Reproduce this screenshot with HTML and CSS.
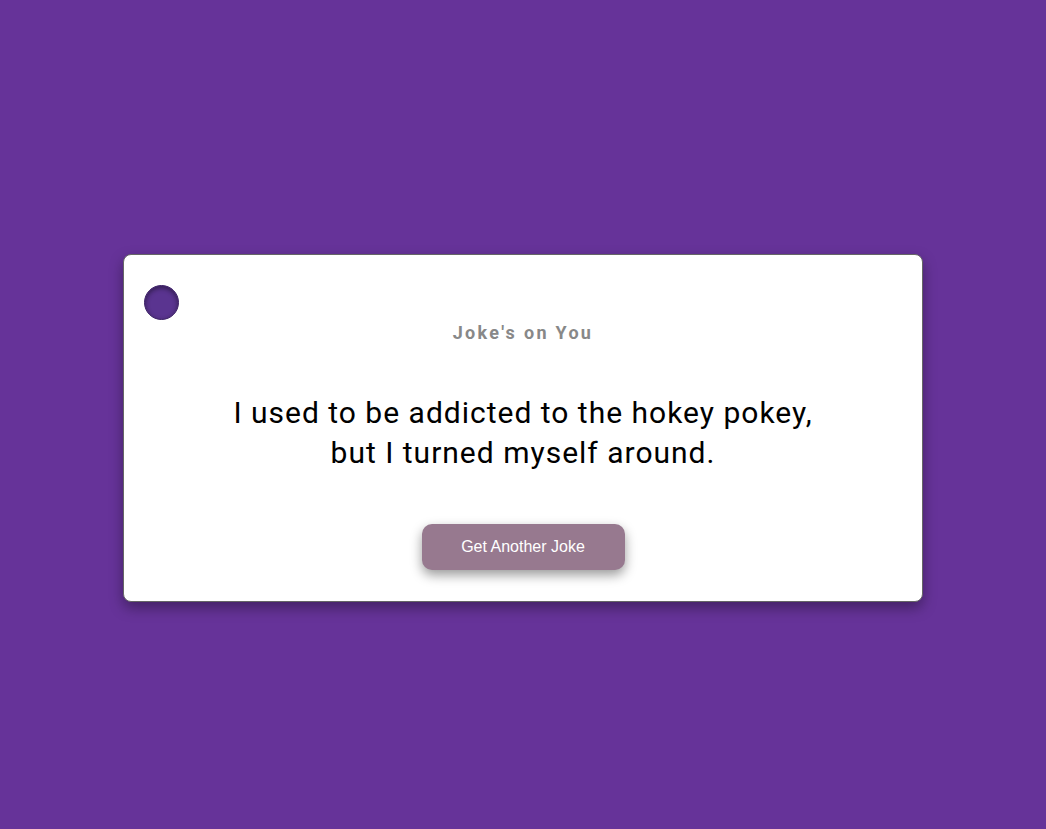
FILE: index.html
```html
<!DOCTYPE html>
<html lang="en">
<head>
<meta charset="utf-8">
<title>Joke's on You</title>
<link rel="stylesheet" href="styles.css">
</head>
<body>
<main class="page">
  <section class="card">
    <span class="dot"></span>
    <h1 class="title">Joke's on You</h1>
    <p class="joke">I used to be addicted to the hokey pokey,<br>but I turned myself around.</p>
    <button class="btn" type="button">Get Another Joke</button>
  </section>
</main>
</body>
</html>
```
FILE: styles.css
```css
html, body {
  margin: 0;
  padding: 0;
}
body {
  background: #663399;
  font-family: Roboto, "Liberation Sans", sans-serif;
}
.page {
  min-height: 829px;
  box-sizing: border-box;
  padding-top: 27px;
  display: flex;
  align-items: center;
  justify-content: center;
}
.card {
  position: relative;
  width: 800px;
  box-sizing: border-box;
  background: #fff;
  border: 1px solid #666;
  border-radius: 8px;
  box-shadow: 0 6px 14px rgba(0, 0, 0, 0.35);
  padding: 67px 20px 31px;
  display: flex;
  flex-direction: column;
  align-items: center;
}
.dot {
  position: absolute;
  left: 20px;
  top: 30px;
  width: 35px;
  height: 35px;
  border-radius: 50%;
  background: #5a3490;
  box-shadow: inset 0 2px 5px rgba(0, 0, 0, 0.45);
  border: 1px solid #3d2266;
  box-sizing: border-box;
}
.title {
  margin: 0 0 49px;
  font-size: 18px;
  line-height: 22px;
  font-weight: 700;
  letter-spacing: 2.3px;
  color: #888;
}
.joke {
  margin: 0 0 51px;
  font-size: 30px;
  line-height: 40px;
  letter-spacing: 1px;
  text-align: center;
  color: #000;
}
.btn {
  width: 203px;
  height: 46px;
  border: none;
  border-radius: 10px;
  background: #97798f;
  color: #fff;
  font-family: Arial, "Liberation Sans", sans-serif;
  font-size: 16px;
  box-shadow: 0 5px 12px rgba(0, 0, 0, 0.4);
  cursor: pointer;
}
```
